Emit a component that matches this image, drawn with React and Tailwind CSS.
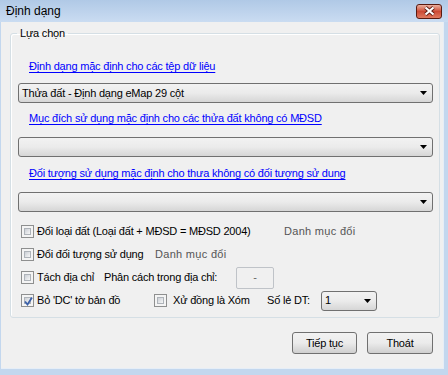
import React from 'react'

const font = { fontFamily: '"Liberation Sans", Arial, sans-serif' }

const Arrow = () => (
  <svg width="7" height="4" viewBox="0 0 7 4" className="shrink-0">
    <polygon points="0,0 7,0 3.5,4" fill="#000" />
  </svg>
)

const Combo = ({ text, className = '' }) => (
  <div className={`flex items-center justify-between border border-[#707070] rounded-[3px] bg-linear-to-b from-[#f2f2f2] via-[#ebebeb] to-[#d6d6d6] pl-[3px] pr-[5px] ${className}`}>
    <span className="text-[11px] leading-none text-black">{text}</span>
    <Arrow />
  </div>
)

const Check = ({ checked }) => (
  <div className="w-[13px] h-[13px] shrink-0 border border-[#8e8f8f] bg-[#f4f4f4] p-[2px]">
    <div className="relative w-full h-full border border-[#aeb3b9] bg-linear-to-br from-[#cbcfd5] to-[#f7f7f7]">
      {checked && (
        <svg width="11" height="11" viewBox="0 0 11 11" className="absolute -left-[2px] -top-[2px]">
          <path d="M2 5.5 L4.5 8.5 L9 1.5" fill="none" stroke="#3a5fa8" strokeWidth="1.8" />
        </svg>
      )}
    </div>
  </div>
)

const Link = ({ children, className = '' }) => (
  <p className={`text-[11px] leading-[14px] text-[#0000ff] underline underline-offset-[2px] pl-[18px] ${className}`}>{children}</p>
)

const Button = ({ children, w }) => (
  <button className={`${w} h-[22px] border border-[#707070] rounded-[3px] bg-linear-to-b from-[#f2f2f2] via-[#ebebeb] to-[#cfcfcf] text-[11px] text-black`}>
    {children}
  </button>
)

const App = () => {
  return (
    <div style={font} className="w-[448px] h-[375px] flex flex-col bg-[#c3d7ee] overflow-hidden tracking-[-0.2px]">
      <div className="h-[22px] shrink-0 flex items-center justify-between pl-[6px] pr-[6px] bg-linear-to-b from-[#b0c9e6] to-[#cadcf1]">
        <span className="text-[12px] text-black tracking-normal">Định dạng</span>
        <div className="w-[26px] h-[15px] rounded-[3px] border border-[#5a1a10] bg-linear-to-b from-[#eab0a0] via-[#cc4a35] to-[#e07a60] flex items-center justify-center">
          <svg width="13" height="10" viewBox="0 0 13 10">
            <path d="M2.5 1.5 L10.5 8.5 M10.5 1.5 L2.5 8.5" stroke="#5a1a12" strokeWidth="3.8" />
            <path d="M2.5 1.5 L10.5 8.5 M10.5 1.5 L2.5 8.5" stroke="#fff" strokeWidth="2.2" />
          </svg>
        </div>
      </div>

      <div className="flex-1 ml-[1px] mr-[4px] mb-[6px] bg-[#f0f0f0] border-r border-b border-[#e6eef7] flex flex-col">
        <fieldset className="ml-[9px] mr-[3px] mt-[4px] border border-[#d5dfe5] rounded-[3px] pb-[5px] shadow-[inset_1px_1px_0_#fff]">
          <legend className="ml-[6px] px-[3px] text-[11px] leading-[14px] text-black">Lựa chọn</legend>

          <Link className="mt-[19px]">Định dạng mặc định cho các tệp dữ liệu</Link>
          <Combo text="Thửa đất - Định dạng eMap 29 cột" className="ml-[7px] w-[415px] h-[20px] mt-[10px]" />

          <Link className="mt-[8px]">Mục đích sử dụng mặc định cho các thửa đất không có MĐSD</Link>
          <Combo text="" className="ml-[7px] w-[415px] h-[20px] mt-[12px]" />

          <Link className="mt-[9px]">Đối tượng sử dụng mặc định cho thưa không có đối tượng sử dung</Link>
          <Combo text="" className="ml-[7px] w-[415px] h-[20px] mt-[12px]" />

          <div className="mt-[8px] pl-[10px] text-[11px] text-black">
            <div className="h-[23px] flex items-center">
              <Check />
              <span className="ml-[3px] w-[247px]">Đổi loại đất (Loại đất + MĐSD = MĐSD 2004)</span>
              <span className="text-[#555] tracking-[0.3px]">Danh mục đổi</span>
            </div>
            <div className="h-[23px] flex items-center">
              <Check />
              <span className="ml-[3px] w-[118px]">Đổi đối tượng sử dụng</span>
              <span className="text-[#555] tracking-[0.3px]">Danh mục đổi</span>
            </div>
            <div className="h-[23px] flex items-center">
              <Check />
              <span className="ml-[3px] w-[67px]">Tách địa chỉ</span>
              <span className="w-[132px]">Phân cách trong địa chỉ:</span>
              <div className="w-[38px] h-[22px] border border-[#bfc3c8] rounded-[2px] bg-[#f0f0f0] flex items-center justify-center text-[#666]">-</div>
            </div>
            <div className="h-[23px] flex items-center">
              <Check checked />
              <span className="ml-[3px] w-[117px]">Bỏ 'DC' tờ bản đồ</span>
              <Check />
              <span className="ml-[6px] w-[94px]">Xử đồng là Xóm</span>
              <span className="w-[54px]">Số lẻ DT:</span>
              <Combo text="1" className="w-[56px] h-[20px]" />
            </div>
          </div>
        </fieldset>

        <div className="mt-[14px] flex justify-end gap-[10px] pr-[10px]">
          <Button w="w-[65px]">Tiếp tục</Button>
          <Button w="w-[66px]">Thoát</Button>
        </div>
      </div>
    </div>
  )
}

export default App
